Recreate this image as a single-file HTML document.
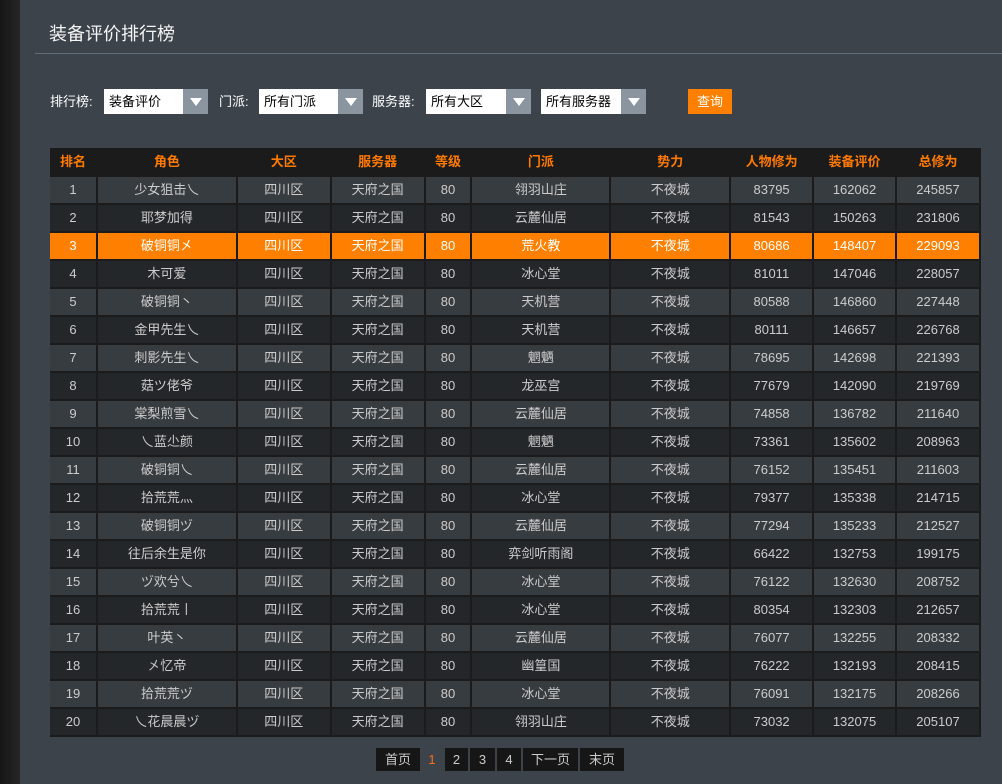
<!DOCTYPE html>
<html><head><meta charset="utf-8"><style>
*{margin:0;padding:0;box-sizing:border-box}
body{width:1002px;height:784px;overflow:hidden;background:#3c434b;font-family:"Liberation Sans","Noto Sans CJK SC",sans-serif;font-size:12px;color:#ccc;position:relative}
.strip{position:absolute;left:0;top:0;width:20px;height:784px;background:linear-gradient(90deg,#161616,#262626)}
h1{position:absolute;left:49px;top:20px;font-size:18px;font-weight:normal;color:#f4f4f4}
.line{position:absolute;left:35px;right:0;top:53px;height:1px;background:#5e6b78}
.lab{position:absolute;top:91px;color:#fff;font-size:13px}
.sel{position:absolute;top:89px;height:25px;background:#fff;color:#000;font-size:13px;line-height:25px;padding-left:5px}
.sel i{position:absolute;right:0;top:0;width:25px;height:25px;background:#8a95a0}
.sel i:after{content:"";position:absolute;left:7px;top:9px;border-left:6px solid transparent;border-right:6px solid transparent;border-top:8px solid #fff}
.btn{position:absolute;left:688px;top:89px;width:44px;height:25px;background:#ff8000;color:#fff;font-size:13px;line-height:25px;text-align:center}
table{position:absolute;left:50px;top:148px;width:931px;border-collapse:collapse;background:#1b1b1b}
td,th{border:1px solid #1b1b1b;border-width:0 2px 2px 0;text-align:center;height:28px;font-weight:normal;font-size:13px;line-height:14px;padding:0}
th{color:#ff7a00;font-weight:bold;height:28px}
tr.o td{background:#373c41}
tr.e td{background:#24272a}
tr.h td{background:#ff8000;color:#fff}
.pg{position:absolute;top:748px;height:23px;background:#161616;color:#ccc;font-size:13px;line-height:23px;text-align:center}
</style></head><body>
<div class="strip"></div>
<h1>装备评价排行榜</h1>
<div class="line"></div>
<div class="lab" style="left:50px">排行榜:</div>
<div class="sel" style="left:104px;width:104px">装备评价<i></i></div>
<div class="lab" style="left:219px">门派:</div>
<div class="sel" style="left:259px;width:104px">所有门派<i></i></div>
<div class="lab" style="left:372px">服务器:</div>
<div class="sel" style="left:426px;width:105px">所有大区<i></i></div>
<div class="sel" style="left:541px;width:105px">所有服务器<i></i></div>
<div class="btn">查询</div>
<table>
<colgroup><col style="width:47px"><col style="width:140px"><col style="width:94px"><col style="width:94px"><col style="width:47px"><col style="width:139px"><col style="width:120px"><col style="width:83px"><col style="width:83px"><col style="width:84px"></colgroup>
<tr><th>排名</th><th>角色</th><th>大区</th><th>服务器</th><th>等级</th><th>门派</th><th>势力</th><th>人物修为</th><th>装备评价</th><th>总修为</th></tr>
<tr class="o"><td>1</td><td>少女狙击乀</td><td>四川区</td><td>天府之国</td><td>80</td><td>翎羽山庄</td><td>不夜城</td><td>83795</td><td>162062</td><td>245857</td></tr>
<tr class="e"><td>2</td><td>耶梦加得</td><td>四川区</td><td>天府之国</td><td>80</td><td>云麓仙居</td><td>不夜城</td><td>81543</td><td>150263</td><td>231806</td></tr>
<tr class="h"><td>3</td><td>破铜铜㐅</td><td>四川区</td><td>天府之国</td><td>80</td><td>荒火教</td><td>不夜城</td><td>80686</td><td>148407</td><td>229093</td></tr>
<tr class="e"><td>4</td><td>木可爱</td><td>四川区</td><td>天府之国</td><td>80</td><td>冰心堂</td><td>不夜城</td><td>81011</td><td>147046</td><td>228057</td></tr>
<tr class="o"><td>5</td><td>破铜铜丶</td><td>四川区</td><td>天府之国</td><td>80</td><td>天机营</td><td>不夜城</td><td>80588</td><td>146860</td><td>227448</td></tr>
<tr class="e"><td>6</td><td>金甲先生乀</td><td>四川区</td><td>天府之国</td><td>80</td><td>天机营</td><td>不夜城</td><td>80111</td><td>146657</td><td>226768</td></tr>
<tr class="o"><td>7</td><td>刺影先生乀</td><td>四川区</td><td>天府之国</td><td>80</td><td>魍魉</td><td>不夜城</td><td>78695</td><td>142698</td><td>221393</td></tr>
<tr class="e"><td>8</td><td>菇ツ佬爷</td><td>四川区</td><td>天府之国</td><td>80</td><td>龙巫宫</td><td>不夜城</td><td>77679</td><td>142090</td><td>219769</td></tr>
<tr class="o"><td>9</td><td>棠梨煎雪乀</td><td>四川区</td><td>天府之国</td><td>80</td><td>云麓仙居</td><td>不夜城</td><td>74858</td><td>136782</td><td>211640</td></tr>
<tr class="e"><td>10</td><td>乀蓝尐颜</td><td>四川区</td><td>天府之国</td><td>80</td><td>魍魉</td><td>不夜城</td><td>73361</td><td>135602</td><td>208963</td></tr>
<tr class="o"><td>11</td><td>破铜铜乀</td><td>四川区</td><td>天府之国</td><td>80</td><td>云麓仙居</td><td>不夜城</td><td>76152</td><td>135451</td><td>211603</td></tr>
<tr class="e"><td>12</td><td>拾荒荒灬</td><td>四川区</td><td>天府之国</td><td>80</td><td>冰心堂</td><td>不夜城</td><td>79377</td><td>135338</td><td>214715</td></tr>
<tr class="o"><td>13</td><td>破铜铜ヅ</td><td>四川区</td><td>天府之国</td><td>80</td><td>云麓仙居</td><td>不夜城</td><td>77294</td><td>135233</td><td>212527</td></tr>
<tr class="e"><td>14</td><td>往后余生是你</td><td>四川区</td><td>天府之国</td><td>80</td><td>弈剑听雨阁</td><td>不夜城</td><td>66422</td><td>132753</td><td>199175</td></tr>
<tr class="o"><td>15</td><td>ヅ欢兮乀</td><td>四川区</td><td>天府之国</td><td>80</td><td>冰心堂</td><td>不夜城</td><td>76122</td><td>132630</td><td>208752</td></tr>
<tr class="e"><td>16</td><td>拾荒荒丨</td><td>四川区</td><td>天府之国</td><td>80</td><td>冰心堂</td><td>不夜城</td><td>80354</td><td>132303</td><td>212657</td></tr>
<tr class="o"><td>17</td><td>叶英丶</td><td>四川区</td><td>天府之国</td><td>80</td><td>云麓仙居</td><td>不夜城</td><td>76077</td><td>132255</td><td>208332</td></tr>
<tr class="e"><td>18</td><td>㐅忆帝</td><td>四川区</td><td>天府之国</td><td>80</td><td>幽篁国</td><td>不夜城</td><td>76222</td><td>132193</td><td>208415</td></tr>
<tr class="o"><td>19</td><td>拾荒荒ヅ</td><td>四川区</td><td>天府之国</td><td>80</td><td>冰心堂</td><td>不夜城</td><td>76091</td><td>132175</td><td>208266</td></tr>
<tr class="e"><td>20</td><td>乀花晨晨ヅ</td><td>四川区</td><td>天府之国</td><td>80</td><td>翎羽山庄</td><td>不夜城</td><td>73032</td><td>132075</td><td>205107</td></tr>
</table>
<div class="pg" style="left:376px;width:44px">首页</div>
<div class="pg" style="left:424px;width:16px;background:none;color:#ff6a1a">1</div>
<div class="pg" style="left:445px;width:23px">2</div>
<div class="pg" style="left:470px;width:25px">3</div>
<div class="pg" style="left:497px;width:24px">4</div>
<div class="pg" style="left:523px;width:55px">下一页</div>
<div class="pg" style="left:580px;width:44px">末页</div>
</body></html>
